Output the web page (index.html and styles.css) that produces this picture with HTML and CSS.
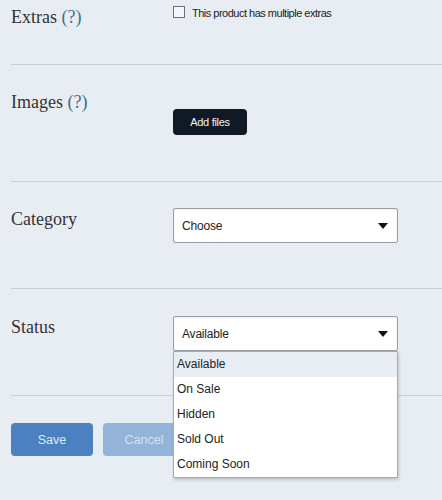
FILE: index.html
```html
<!DOCTYPE html>
<html>
<head>
<meta charset="utf-8">
<link rel="stylesheet" href="styles.css">
</head>
<body>
<div class="form">
  <div class="row row-extras">
    <div class="label">Extras <span class="help">(?)</span></div>
    <div class="field">
      <div class="check"><span class="box"></span><span class="check-text">This product has multiple extras</span></div>
    </div>
  </div>
  <div class="row row-images">
    <div class="label">Images <span class="help">(?)</span></div>
    <div class="field"><button class="btn-dark">Add files</button></div>
  </div>
  <div class="row">
    <div class="label">Category</div>
    <div class="field">
      <div class="select"><span>Choose</span><span class="caret"></span></div>
    </div>
  </div>
  <div class="row row-status">
    <div class="label">Status</div>
    <div class="field">
      <div class="select-wrap">
        <div class="select"><span>Available</span><span class="caret"></span></div>
        <ul class="menu">
          <li class="opt active">Available</li>
          <li class="opt">On Sale</li>
          <li class="opt">Hidden</li>
          <li class="opt">Sold Out</li>
          <li class="opt">Coming Soon</li>
        </ul>
      </div>
    </div>
  </div>
  <div class="actions">
    <button class="btn save">Save</button>
    <button class="btn cancel">Cancel</button>
  </div>
</div>
</body>
</html>
```
FILE: styles.css
```css
html, body {
  margin: 0;
  padding: 0;
  background: #e8edf3;
}
body {
  min-height: 500px;
}
.form {
  margin-left: 11px;
}
.row {
  display: flex;
  border-bottom: 1px solid #c6d1dd;
  padding: 26px 0 45px;
}
.row-extras {
  padding: 6px 0 0;
  height: 58px;
}
.row-images {
  padding-bottom: 46px;
}
.row-status {
  padding: 27px 0 44px;
}
.label {
  width: 162px;
  flex: none;
  font-family: "Liberation Serif", serif;
  font-size: 18px;
  line-height: 22px;
  color: #333;
}
.help {
  color: #3e6f90;
}
.field {
  width: 225px;
}
.check {
  display: flex;
  align-items: flex-start;
  gap: 7px;
}
.box {
  width: 10px;
  height: 10px;
  border: 1px solid #6b6f74;
  background: #f4f6f9;
  flex: none;
}
.check-text {
  font-family: "Liberation Sans", Arial, sans-serif;
  font-size: 11px;
  letter-spacing: -0.5px;
  line-height: 14px;
  color: #222;
}
.btn-dark {
  margin-top: 18px;
  width: 74px;
  height: 26px;
  border: none;
  border-radius: 4px;
  background: #0f1a26;
  color: #f2f4f6;
  font-family: "Liberation Sans", Arial, sans-serif;
  font-size: 11px;
  letter-spacing: -0.3px;
  padding: 0;
}
.select-wrap {
  position: relative;
}
.select {
  box-sizing: border-box;
  height: 35px;
  width: 225px;
  border: 1px solid #9a9ea3;
  border-radius: 2px;
  background: #fff;
  box-shadow: inset 0 1px 2px rgba(0,0,0,0.08);
  display: flex;
  align-items: center;
  justify-content: space-between;
  padding: 0 9px 0 8px;
  font-family: "Liberation Sans", Arial, sans-serif;
  font-size: 12px;
  letter-spacing: -0.2px;
  color: #222;
}
.caret {
  width: 0;
  height: 0;
  border-left: 5px solid transparent;
  border-right: 5px solid transparent;
  border-top: 6px solid #111;
  margin-top: 1px;
}
.menu {
  position: absolute;
  top: 100%;
  left: 0;
  width: 225px;
  box-sizing: border-box;
  margin: 0;
  padding: 0;
  list-style: none;
  background: #fff;
  border: 1px solid #a7abb0;
  box-shadow: 1px 2px 3px rgba(0,0,0,0.18);
  z-index: 5;
}
.opt {
  height: 25px;
  line-height: 25px;
  padding-left: 3px;
  font-family: "Liberation Sans", Arial, sans-serif;
  font-size: 12px;
  color: #222;
}
.opt.active {
  background: #e9eef5;
}
.actions {
  display: flex;
  gap: 10px;
  padding-top: 27px;
}
.btn {
  width: 82px;
  height: 33px;
  border: none;
  border-radius: 4px;
  font-family: "Liberation Sans", Arial, sans-serif;
  font-size: 12.5px;
  padding: 0;
}
.save {
  background: #4b80c1;
  color: #dfe8f4;
}
.cancel {
  background: #93b3d9;
  color: #d6e2f0;
}
```
